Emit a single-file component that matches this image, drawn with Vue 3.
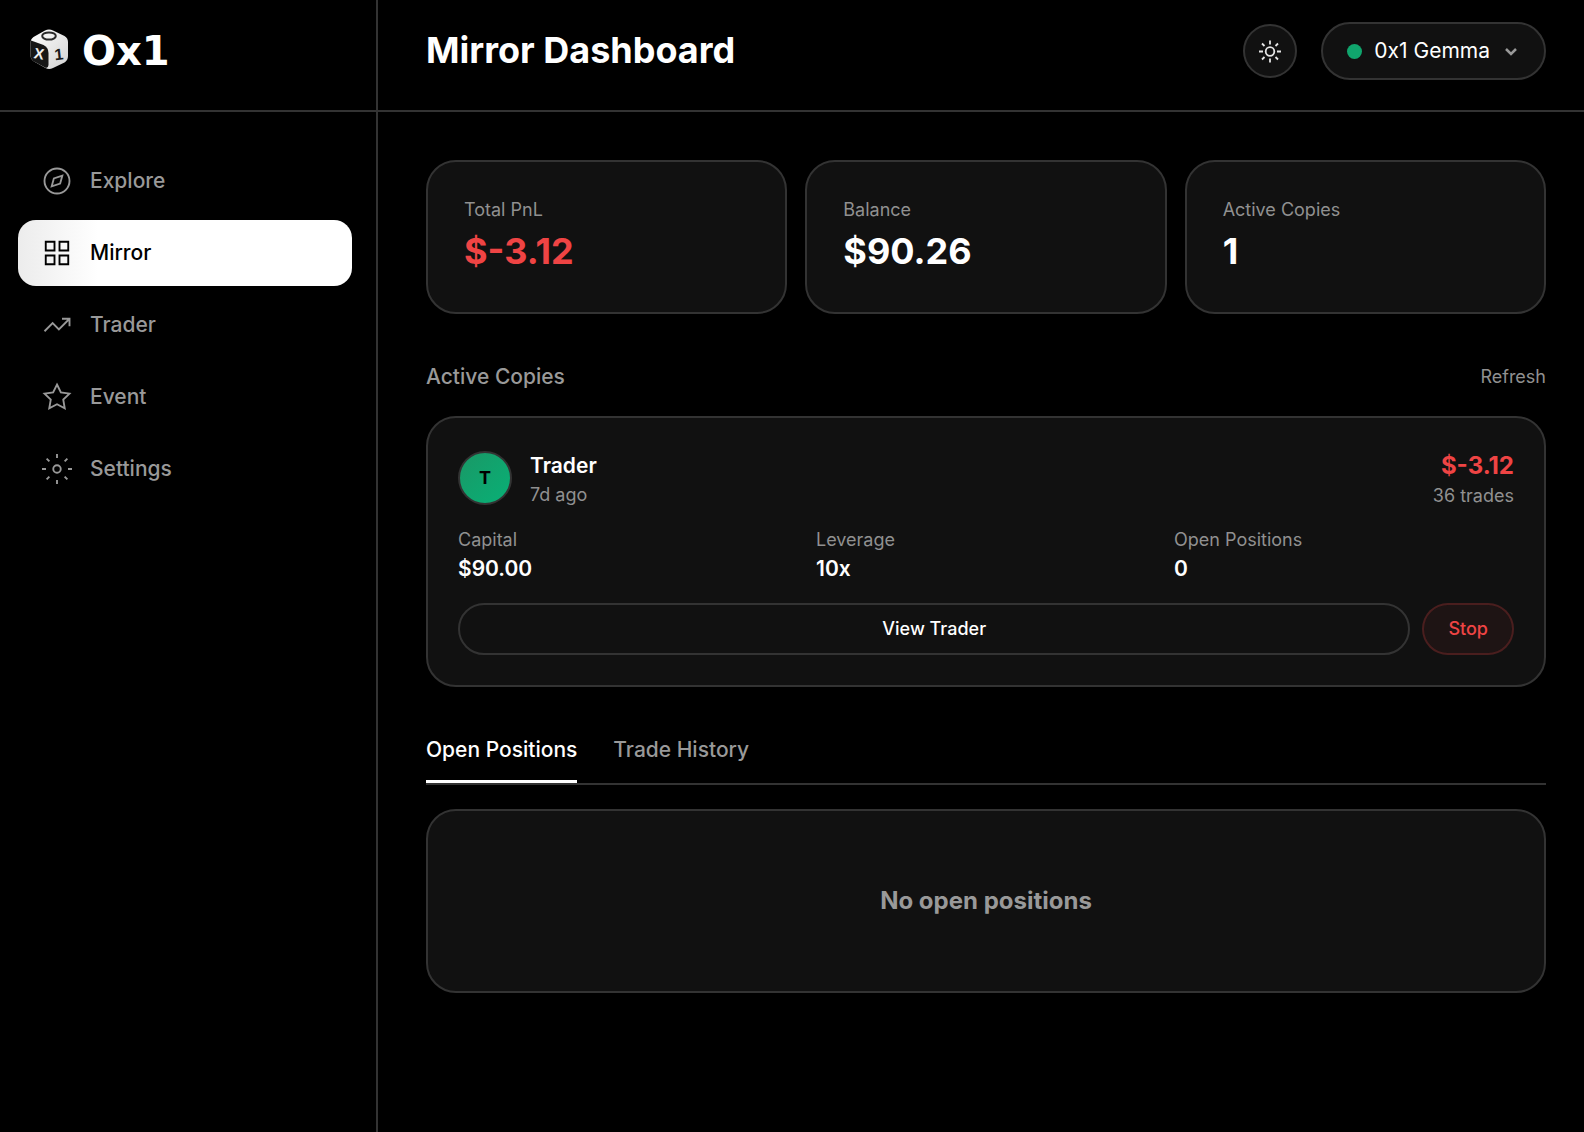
<template>
  <div class="app">
    <aside class="sidebar">
      <a class="brand" href="#" aria-label="0x1 home">
        <svg class="dice" viewBox="0 0 40 40" aria-hidden="true">
          <defs>
            <linearGradient id="die-light" x1="0" y1="0" x2="1" y2="1">
              <stop offset="0" stop-color="#fff" />
              <stop offset="1" stop-color="#d2d2d2" />
            </linearGradient>
          </defs>
          <path d="M15 1.500Q19 -.5 23 1.500L34.500 7Q38 9 38 13V27Q38 31 34.500 33.500L23 39Q19 41 15.500 39L4 32.500Q.5 30 .5 26V14Q.5 10 3.500 8Z" fill="url(#die-light)" />
          <path d="M1 11.500L13.500 16Q18.500 18.500 18.500 24V36Q18.500 38.500 16 39L4 32.500Q.5 30 .5 26V14Q.5 12.500 1 11.500Z" fill="#161616" />
          <ellipse cx="19" cy="7" rx="6.800" ry="3.600" fill="none" stroke="#2a2a2a" stroke-width="2" />
          <text x="4" y="30" transform="rotate(10 9 25)" font-size="15" fill="#eee">X</text>
          <text x="24.500" y="31" transform="rotate(-6 28 26)" font-size="16" fill="#1a1a1a">1</text>
        </svg>
        <span class="wordmark">Ox1</span>
      </a>
      <nav class="nav">
        <a v-for="item in navItems" :key="item.label" href="#" class="nav-item"
           :class="{ active: item.label === current }" @click.prevent="current = item.label">
          <svg viewBox="0 0 24 24" aria-hidden="true"><path :d="item.icon" /></svg>
          <span>{{ item.label }}</span>
        </a>
      </nav>
    </aside>

    <div class="page">
      <header class="topbar">
        <h1>Mirror Dashboard</h1>
        <div class="actions">
          <button class="theme" aria-label="Toggle theme">
            <svg viewBox="0 0 24 24" aria-hidden="true">
              <circle cx="12" cy="12.500" r="4.300" />
              <path d="M12 1.500v4M12 19.500v4M1 12.500h4M19 12.500h4M4 4.500l2.500 2.500M17.500 18L20 20.500M4 20.500l2.500-2.500M17.500 7L20 4.500" />
            </svg>
          </button>
          <button class="account" aria-haspopup="menu">
            <span class="dot"></span>
            <span>0x1 Gemma</span>
            <svg viewBox="0 0 18 18" aria-hidden="true"><path d="M4 7l5 5 5-5" /></svg>
          </button>
        </div>
      </header>

      <main class="content">
        <section class="stats">
          <div v-for="s in stats" :key="s.label" class="card stat">
            <div class="label">{{ s.label }}</div>
            <div class="value" :class="{ loss: s.loss }">{{ s.value }}</div>
          </div>
        </section>

        <section>
          <div class="section-head">
            <h2>Active Copies</h2>
            <button class="refresh">Refresh</button>
          </div>
          <article class="card copy">
            <div class="copy-head">
              <div class="avatar">T</div>
              <div class="who">
                <div class="name">Trader</div>
                <div class="label">7d ago</div>
              </div>
              <div class="result">
                <div class="pnl loss">$-3.12</div>
                <div class="label">36 trades</div>
              </div>
            </div>
            <div class="details">
              <div v-for="d in details" :key="d.label">
                <div class="label">{{ d.label }}</div>
                <div class="detail">{{ d.value }}</div>
              </div>
            </div>
            <div class="buttons">
              <button class="btn view">View Trader</button>
              <button class="btn stop">Stop</button>
            </div>
          </article>
        </section>

        <section>
          <div class="tabs" role="tablist">
            <button v-for="t in tabs" :key="t" role="tab" class="tab"
                    :class="{ active: t === tab }" :aria-selected="t === tab" @click="tab = t">{{ t }}</button>
          </div>
          <div class="card empty">{{ tab === 'Open Positions' ? 'No open positions' : 'No trade history' }}</div>
        </section>
      </main>
    </div>
  </div>
</template>

<script setup>
import { ref } from 'vue'

const current = ref('Mirror')
const tab = ref('Open Positions')
const tabs = ['Open Positions', 'Trade History']

const navItems = [
  { label: 'Explore', icon: 'M22 12a10 10 0 1 1-20 0a10 10 0 1 1 20 0M16.240 7.760L14.500 14.100 7.760 16.240 9.500 9.900Z' },
  { label: 'Mirror', icon: 'M3 3h7v7H3zM14 3h7v7h-7zM14 14h7v7h-7zM3 14h7v7H3z' },
  { label: 'Trader', icon: 'M22 7l-8.500 8.500-5-5L2 17M16 7h6v6' },
  { label: 'Event', icon: 'M12 2l3.090 6.260L22 9.270l-5 4.870 1.180 6.880L12 17.770l-6.180 3.250L7 14.140 2 9.270l6.910-1.010z' },
  { label: 'Settings', icon: 'M15 12a3 3 0 1 1-6 0a3 3 0 1 1 6 0M12 0v3.200M12 20.800V24M0 12h3.200M20.800 12H24M3.700 3.700l2.200 2.200M18.100 18.100l2.200 2.200M3.700 20.300l2.200-2.200M18.100 5.900l2.200-2.200' },
]

const stats = [
  { label: 'Total PnL', value: '$-3.12', loss: true },
  { label: 'Balance', value: '$90.26' },
  { label: 'Active Copies', value: '1' },
]

const details = [
  { label: 'Capital', value: '$90.00' },
  { label: 'Leverage', value: '10x' },
  { label: 'Open Positions', value: '0' },
]
</script>

<style>
body { margin: 0; background: #000; }
</style>

<style scoped>
* { box-sizing: border-box; }
.app { display: flex; min-height: 100vh; background: #000; color: #fff; font: 400 21px/30px Inter, "Liberation Sans", sans-serif; }
button { font: inherit; color: inherit; background: none; border: none; padding: 0; cursor: pointer; }
a { color: inherit; text-decoration: none; }
h1, h2 { margin: 0; }

.sidebar { flex: 0 0 378px; border-right: 2px solid #333; }
.brand { display: flex; align-items: center; gap: 12px; height: 112px; padding: 0 30px 12px; border-bottom: 2px solid #333; }
.dice { width: 40px; height: 40px; font-family: "Liberation Sans", sans-serif; font-weight: 700; }
.wordmark { padding-top: 4px; font: 700 40px/40px "DejaVu Sans", sans-serif; }
.nav { display: flex; flex-direction: column; gap: 6px; padding: 36px 24px 36px 18px; }
.nav-item { display: flex; align-items: center; gap: 18px; height: 66px; padding: 0 24px; border-radius: 18px; color: #999; font-weight: 500; }
.nav-item svg { width: 30px; height: 30px; fill: none; stroke: currentColor; stroke-width: 1.5; overflow: visible; }
.nav-item.active { color: #000; background: linear-gradient(90deg, #ececec, #fff 24%); }

.page { flex: 1; min-width: 0; }
.topbar { display: flex; align-items: center; justify-content: space-between; height: 112px; padding: 0 38px 8px 48px; border-bottom: 2px solid #333; }
.topbar h1 { padding-bottom: 2px; font-size: 36px; line-height: 42px; font-weight: 700; }
.actions { display: flex; align-items: center; gap: 24px; }
.theme { display: flex; align-items: center; justify-content: center; width: 54px; height: 54px; border: 2px solid #333; border-radius: 50%; background: #111; }
.theme svg { width: 24px; height: 24px; fill: none; stroke: #e5e5e5; stroke-width: 1.8; }
.account { display: flex; align-items: center; gap: 12px; height: 58px; padding: 0 24px; border: 2px solid #333; border-radius: 30px; background: #111; }
.account svg { width: 18px; height: 18px; fill: none; stroke: #999; stroke-width: 2.5; }
.dot { width: 15px; height: 15px; border-radius: 50%; background: #10a56d; }

.content { display: flex; flex-direction: column; gap: 48px; padding: 48px 38px 48px 48px; }
.card { border: 2px solid #333; border-radius: 30px; background: #111; }
.label { color: #909090; font-size: 18px; line-height: 24px; }
.stats { display: grid; grid-template-columns: repeat(3, 1fr); gap: 18px; }
.stat { padding: 36px 36px 38px; }
.value { margin-top: 6px; font-size: 36px; line-height: 46px; font-weight: 700; }
.loss { color: #ef4444; }

.section-head { display: flex; align-items: center; justify-content: space-between; margin-bottom: 24px; color: #999; }
.section-head h2 { font-size: 21px; line-height: 30px; font-weight: 500; }
.refresh { color: #909090; font-size: 18px; line-height: 24px; }
.copy { display: flex; flex-direction: column; gap: 18px; padding: 30px; }
.copy-head { display: flex; align-items: center; gap: 18px; }
.avatar { display: flex; align-items: center; justify-content: center; width: 54px; height: 54px; border: 2px solid #333; border-radius: 50%; background: linear-gradient(135deg, #1a9866, #08b076); color: #000; font-size: 18px; font-weight: 700; }
.who { flex: 1; }
.name { font-weight: 600; line-height: 34px; }
.result { text-align: right; }
.pnl { font-size: 24px; line-height: 36px; font-weight: 700; }
.details { display: grid; grid-template-columns: repeat(3, 1fr); gap: 18px; }
.details .label { line-height: 27px; }
.detail { line-height: 32px; font-weight: 600; }
.buttons { display: flex; gap: 12px; }
.btn { height: 52px; padding: 0 24px; border: 2px solid #333; border-radius: 26px; font-size: 18px; font-weight: 500; }
.view { flex: 1; }
.stop { color: #ef4444; background: rgba(239, 68, 68, .06); border-color: rgba(239, 68, 68, .22); }

.tabs { display: flex; gap: 36px; border-bottom: 2px solid #333; }
.tab { padding-bottom: 15px; border-bottom: 3px solid transparent; color: #999; font-weight: 500; }
.tab.active { color: #fff; border-color: #fff; }
.empty { margin-top: 24px; padding: 72px 24px; color: #999; font-size: 24px; line-height: 36px; font-weight: 700; text-align: center; }
</style>
